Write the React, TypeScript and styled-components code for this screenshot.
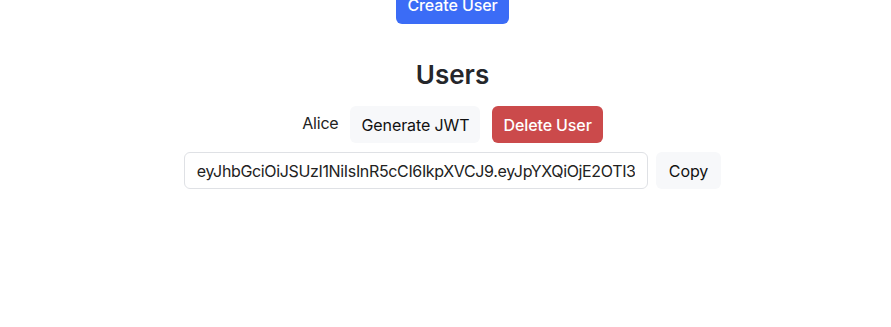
import styled, { createGlobalStyle } from "styled-components";

const GlobalStyle = createGlobalStyle`
  html, body {
    margin: 0;
    padding: 0;
    background: #ffffff;
  }
  body {
    font-family: Inter, "Helvetica Neue", Arial, sans-serif;
    color: #222222;
    overflow: hidden;
  }
`;

const Page = styled.div`
  display: flex;
  flex-direction: column;
  align-items: center;
  padding-left: 14px;
  margin-top: -14px;
`;

const Button = styled.button<{ $variant?: "primary" | "danger" | "plain" }>`
  font-family: Inter, "Helvetica Neue", Arial, sans-serif;
  font-size: 16px;
  font-weight: ${({ $variant }) => ($variant === "plain" ? 400 : 500)};
  letter-spacing: -0.1px;
  height: 37px;
  padding: 0 11px;
  border: none;
  border-radius: 6px;
  cursor: pointer;
  background: ${({ $variant }) =>
    $variant === "primary" ? "#3b6cf6" : $variant === "danger" ? "#cb4a4b" : "#f7f8fa"};
  color: ${({ $variant }) => ($variant === "plain" ? "#111111" : "#ffffff")};
`;

const CreateButton = styled(Button)`
  height: 38px;
`;

const CopyButton = styled(Button)`
  padding: 0 13px;
`;

const Title = styled.h2`
  margin: 35px 0 0;
  font-size: 26px;
  font-weight: 600;
  line-height: 32px;
  color: #25272b;
`;

const UserRow = styled.div`
  display: flex;
  align-items: center;
  gap: 12px;
  margin-top: 15px;
`;

const Name = styled.span`
  font-size: 16px;
  color: #222222;
  margin-top: -3px;
  letter-spacing: -0.2px;
`;

const TokenRow = styled.div`
  display: flex;
  align-items: center;
  gap: 8px;
  margin-top: 9px;
`;

const TokenInput = styled.input`
  width: 464px;
  height: 37px;
  box-sizing: border-box;
  padding: 0 12px;
  border: 1px solid #dfe1e5;
  border-radius: 6px;
  font-family: Inter, "Helvetica Neue", Arial, sans-serif;
  font-size: 16px;
  letter-spacing: -0.35px;
  color: #222222;
  outline: none;
`;

const token =
  "eyJhbGciOiJSUzI1NiIsInR5cCI6IkpXVCJ9.eyJpYXQiOjE2OTI3NDQ4MDAsInN1YiI6ImFsaWNlIn0.signature";

export default function App() {
  return (
    <>
      <GlobalStyle />
      <Page>
        <CreateButton $variant="primary">Create User</CreateButton>
        <Title>Users</Title>
        <UserRow>
          <Name>Alice</Name>
          <Button $variant="plain">Generate JWT</Button>
          <Button $variant="danger">Delete User</Button>
        </UserRow>
        <TokenRow>
          <TokenInput readOnly value={token} />
          <CopyButton $variant="plain">Copy</CopyButton>
        </TokenRow>
      </Page>
    </>
  );
}
